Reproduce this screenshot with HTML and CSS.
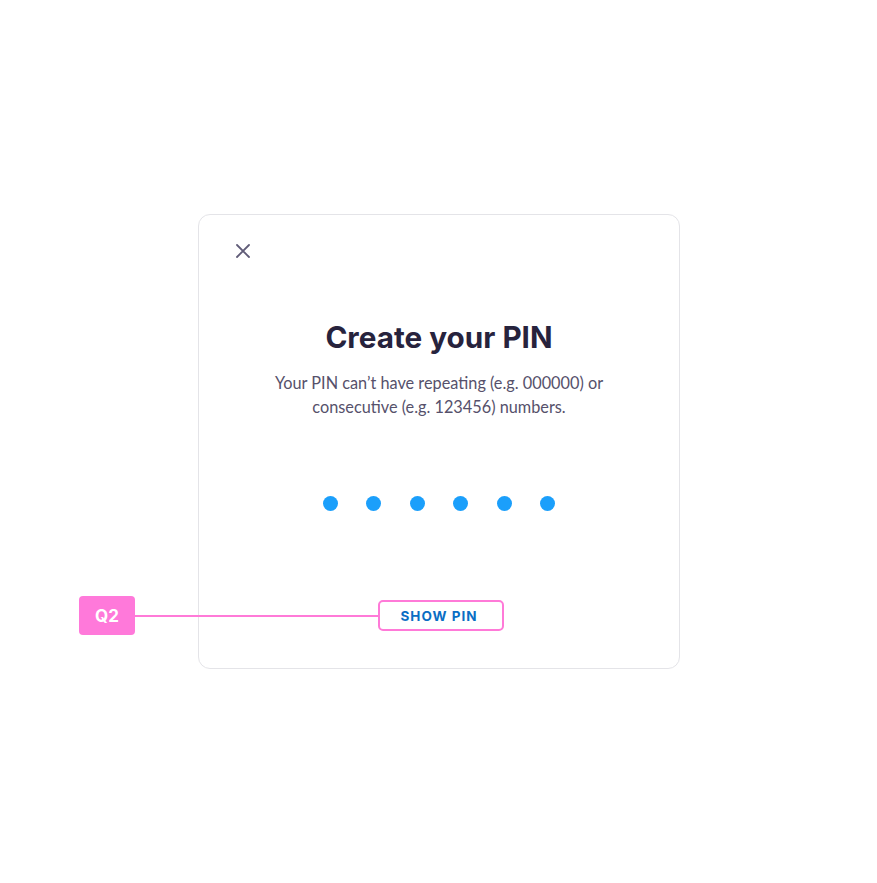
FILE: index.html
```html
<!DOCTYPE html>
<html lang="en">
<head>
<meta charset="utf-8">
<title>Create your PIN</title>
<link rel="stylesheet" href="styles.css">
</head>
<body>
<div class="page">
  <div class="card">
    <button class="close" aria-label="Close">
      <svg width="14" height="14" viewBox="0 0 14 14"><path d="M1 1 L13 13 M13 1 L1 13" stroke="#605c78" stroke-width="1.8" stroke-linecap="round" fill="none"/></svg>
    </button>
    <h1 class="title">Create your PIN</h1>
    <p class="subtitle">Your PIN can’t have repeating (e.g. 000000) or<br>consecutive (e.g. 123456) numbers.</p>
    <div class="dots">
      <span class="dot"></span><span class="dot"></span><span class="dot"></span><span class="dot"></span><span class="dot"></span><span class="dot"></span>
    </div>
    <div class="actions">
      <button class="show-pin">SHOW PIN</button>
      <div class="annotation">
        <span class="badge">Q2</span>
        <span class="connector"></span>
      </div>
    </div>
  </div>
</div>
</body>
</html>
```
FILE: styles.css
```css
html, body {
  margin: 0;
  padding: 0;
  background: #ffffff;
}
body {
  font-family: "Lato", "Inter", "Liberation Sans", sans-serif;
}
.page {
  padding: 214px 0 0 198px;
}
.card {
  box-sizing: border-box;
  width: 482px;
  height: 455px;
  border: 1px solid #e4e4e8;
  border-radius: 12px;
  padding: 29px 0 0 0;
  display: flex;
  flex-direction: column;
  align-items: center;
}
.close {
  align-self: flex-start;
  margin-left: 37px;
  width: 14px;
  height: 14px;
  padding: 0;
  border: 0;
  background: none;
  display: block;
}
.close svg { display: block; }
.title {
  margin: 61px 0 0 0;
  font-family: "Inter", "Liberation Sans", sans-serif;
  font-weight: 700;
  font-size: 29.7px;
  line-height: 36px;
  letter-spacing: 0;
  color: #27233d;
}
.subtitle {
  margin: 16px 0 0 0;
  font-family: "Lato", "Liberation Sans", sans-serif;
  font-size: 16.3px;
  line-height: 24px;
  color: #56516b;
  text-align: center;
}
.dots {
  margin-top: 77px;
  display: flex;
  gap: 28.5px;
}
.dot {
  width: 15px;
  height: 15px;
  border-radius: 50%;
  background: #1b9ffb;
}
.actions {
  position: relative;
  margin-top: 89px;
  margin-left: 4px;
}
.show-pin {
  box-sizing: border-box;
  width: 126px;
  height: 31px;
  border: 2px solid #ff7ad8;
  border-radius: 5px;
  background: #fff;
  color: #0a6ec4;
  font-family: "Inter", "Liberation Sans", sans-serif;
  font-weight: 700;
  font-size: 13.5px;
  letter-spacing: 1px;
  padding: 0 4px 0 0;
  display: block;
}
.annotation {
  position: absolute;
  left: -299px;
  top: -4px;
  display: flex;
  align-items: center;
}
.badge {
  width: 56px;
  height: 39px;
  border-radius: 4px;
  background: #ff79da;
  color: #fff;
  font-family: "Inter", "Liberation Sans", sans-serif;
  font-weight: 700;
  font-size: 17px;
  display: flex;
  align-items: center;
  justify-content: center;
}
.connector {
  width: 243px;
  height: 2px;
  background: #ff7ad8;
}
```
